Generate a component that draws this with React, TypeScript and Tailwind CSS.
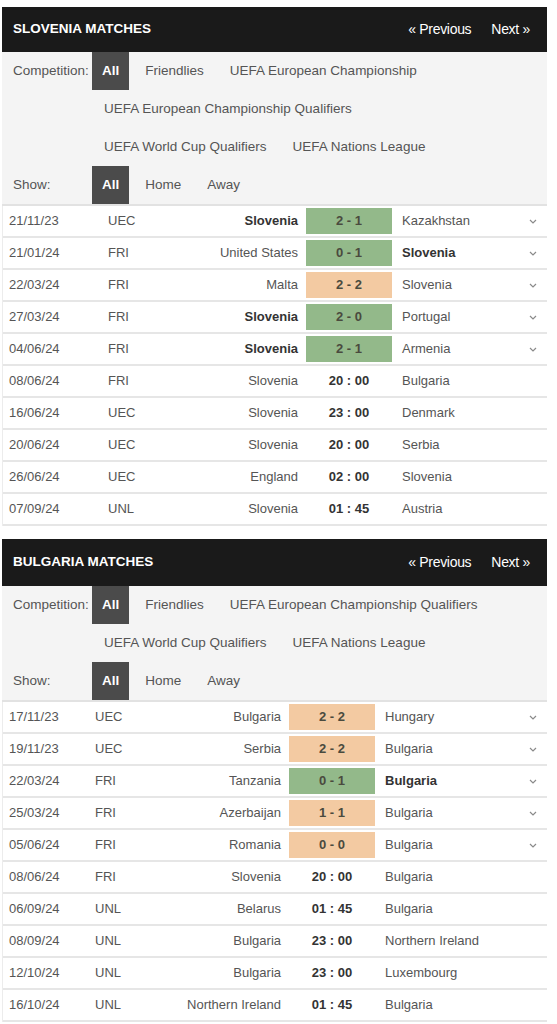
import React from 'react'

type Match = {
  date: string
  comp: string
  home: string
  away: string
  score?: string
  time?: string
  result?: 'win' | 'draw'
  boldHome?: boolean
  boldAway?: boolean
}

type Cols = { date: string; comp: string; home: string }

const slovenia: Match[] = [
  { date: '21/11/23', comp: 'UEC', home: 'Slovenia', away: 'Kazakhstan', score: '2 - 1', result: 'win', boldHome: true },
  { date: '21/01/24', comp: 'FRI', home: 'United States', away: 'Slovenia', score: '0 - 1', result: 'win', boldAway: true },
  { date: '22/03/24', comp: 'FRI', home: 'Malta', away: 'Slovenia', score: '2 - 2', result: 'draw' },
  { date: '27/03/24', comp: 'FRI', home: 'Slovenia', away: 'Portugal', score: '2 - 0', result: 'win', boldHome: true },
  { date: '04/06/24', comp: 'FRI', home: 'Slovenia', away: 'Armenia', score: '2 - 1', result: 'win', boldHome: true },
  { date: '08/06/24', comp: 'FRI', home: 'Slovenia', away: 'Bulgaria', time: '20 : 00' },
  { date: '16/06/24', comp: 'UEC', home: 'Slovenia', away: 'Denmark', time: '23 : 00' },
  { date: '20/06/24', comp: 'UEC', home: 'Slovenia', away: 'Serbia', time: '20 : 00' },
  { date: '26/06/24', comp: 'UEC', home: 'England', away: 'Slovenia', time: '02 : 00' },
  { date: '07/09/24', comp: 'UNL', home: 'Slovenia', away: 'Austria', time: '01 : 45' },
]

const bulgaria: Match[] = [
  { date: '17/11/23', comp: 'UEC', home: 'Bulgaria', away: 'Hungary', score: '2 - 2', result: 'draw' },
  { date: '19/11/23', comp: 'UEC', home: 'Serbia', away: 'Bulgaria', score: '2 - 2', result: 'draw' },
  { date: '22/03/24', comp: 'FRI', home: 'Tanzania', away: 'Bulgaria', score: '0 - 1', result: 'win', boldAway: true },
  { date: '25/03/24', comp: 'FRI', home: 'Azerbaijan', away: 'Bulgaria', score: '1 - 1', result: 'draw' },
  { date: '05/06/24', comp: 'FRI', home: 'Romania', away: 'Bulgaria', score: '0 - 0', result: 'draw' },
  { date: '08/06/24', comp: 'FRI', home: 'Slovenia', away: 'Bulgaria', time: '20 : 00' },
  { date: '06/09/24', comp: 'UNL', home: 'Belarus', away: 'Bulgaria', time: '01 : 45' },
  { date: '08/09/24', comp: 'UNL', home: 'Bulgaria', away: 'Northern Ireland', time: '23 : 00' },
  { date: '12/10/24', comp: 'UNL', home: 'Bulgaria', away: 'Luxembourg', time: '23 : 00' },
  { date: '16/10/24', comp: 'UNL', home: 'Northern Ireland', away: 'Bulgaria', time: '01 : 45' },
]

function Chevron() {
  return (
    <svg width="8" height="5" viewBox="0 0 8 5" fill="none">
      <path d="M1 1l3 3 3-3" stroke="#8a8a8a" strokeWidth="1.2" />
    </svg>
  )
}

function Header({ title, tall }: { title: string; tall?: boolean }) {
  return (
    <div className={`flex items-center justify-between bg-[#1a1a1a] pl-[11px] pr-[17px] text-white ${tall ? 'h-[47px]' : 'h-[45px]'}`}>
      <span className="text-[13.5px] font-bold">{title}</span>
      <div className="flex gap-[20px] text-[14px] tracking-[-0.3px]">
        <span>« Previous</span>
        <span>Next »</span>
      </div>
    </div>
  )
}

function Item({ label, active }: { label: string; active?: boolean }) {
  return (
    <span
      className={`mr-[6px] flex h-full items-center px-[10px] ${active ? 'bg-[#4b4b4b] font-bold text-white' : 'text-[#555]'}`}
    >
      {label}
    </span>
  )
}

function FilterRow({ label, items, first }: { label?: string; items: string[]; first?: boolean }) {
  return (
    <div className="flex h-[38px] items-center">
      <span className="w-[79px] shrink-0 text-[#555]">{label}</span>
      <div className={`flex h-full items-center ${first ? '' : 'pl-[2px]'}`}>
        {first && <Item label="All" active />}
        {items.map((it) => (
          <Item key={it} label={it} />
        ))}
      </div>
    </div>
  )
}

function Filters({ lines }: { lines: string[][] }) {
  return (
    <div className="border-b-2 border-[#e2e2e2] bg-[#f4f4f4] pl-[11px] text-[13.5px]">
      <FilterRow label="Competition:" items={lines[0]} first />
      {lines.slice(1).map((l, i) => (
        <FilterRow key={i} items={l} />
      ))}
      <FilterRow label="Show:" items={['Home', 'Away']} first />
    </div>
  )
}

function Row({ m, cols }: { m: Match; cols: Cols }) {
  const box = m.result === 'win' ? 'bg-[#93b98a]' : 'bg-[#f3caa2]'
  return (
    <div className="flex h-[32px] items-stretch border-b-2 border-[#e6e6e6] text-[13px] text-[#555]">
      <div className={`${cols.date} flex items-center pl-[6px]`}>{m.date}</div>
      <div className={`${cols.comp} flex items-center pl-[8px]`}>{m.comp}</div>
      <div className={`${cols.home} flex items-center justify-end pr-[8px] ${m.boldHome ? 'font-bold text-[#333]' : ''}`}>
        {m.home}
      </div>
      <div className="flex w-[86px] items-center py-[2px]">
        {m.score ? (
          <div className={`${box} flex h-full w-full items-center justify-center font-bold text-[#4a4a3e]`}>{m.score}</div>
        ) : (
          <div className="flex w-full justify-center font-bold text-[#333]">{m.time}</div>
        )}
      </div>
      <div className={`flex flex-1 items-center pl-[10px] ${m.boldAway ? 'font-bold text-[#333]' : ''}`}>{m.away}</div>
      <div className="flex w-[28px] items-center justify-center">{m.score && <Chevron />}</div>
    </div>
  )
}

function Panel({
  title,
  lines,
  matches,
  cols,
  tall,
}: {
  title: string
  lines: string[][]
  matches: Match[]
  cols: Cols
  tall?: boolean
}) {
  return (
    <div className="mx-[2px] w-[545px]">
      <Header title={title} tall={tall} />
      <Filters lines={lines} />
      <div className="border-l border-[#ececec] bg-white">
        {matches.map((m, i) => (
          <Row key={m.date + m.home + i} m={m} cols={cols} />
        ))}
      </div>
    </div>
  )
}

export default function App() {
  return (
    <div className="min-h-[1024px] w-[557px] bg-white pt-[7px] font-['Liberation_Sans',Arial,sans-serif]">
      <Panel
        title="SLOVENIA MATCHES"
        lines={[
          ['Friendlies', 'UEFA European Championship'],
          ['UEFA European Championship Qualifiers'],
          ['UEFA World Cup Qualifiers', 'UEFA Nations League'],
        ]}
        matches={slovenia}
        cols={{ date: 'w-[97px]', comp: 'w-[100px]', home: 'w-[106px]' }}
      />
      <div className="h-[13px]" />
      <Panel
        title="BULGARIA MATCHES"
        tall
        lines={[
          ['Friendlies', 'UEFA European Championship Qualifiers'],
          ['UEFA World Cup Qualifiers', 'UEFA Nations League'],
        ]}
        matches={bulgaria}
        cols={{ date: 'w-[84px]', comp: 'w-[90px]', home: 'w-[112px]' }}
      />
    </div>
  )
}
